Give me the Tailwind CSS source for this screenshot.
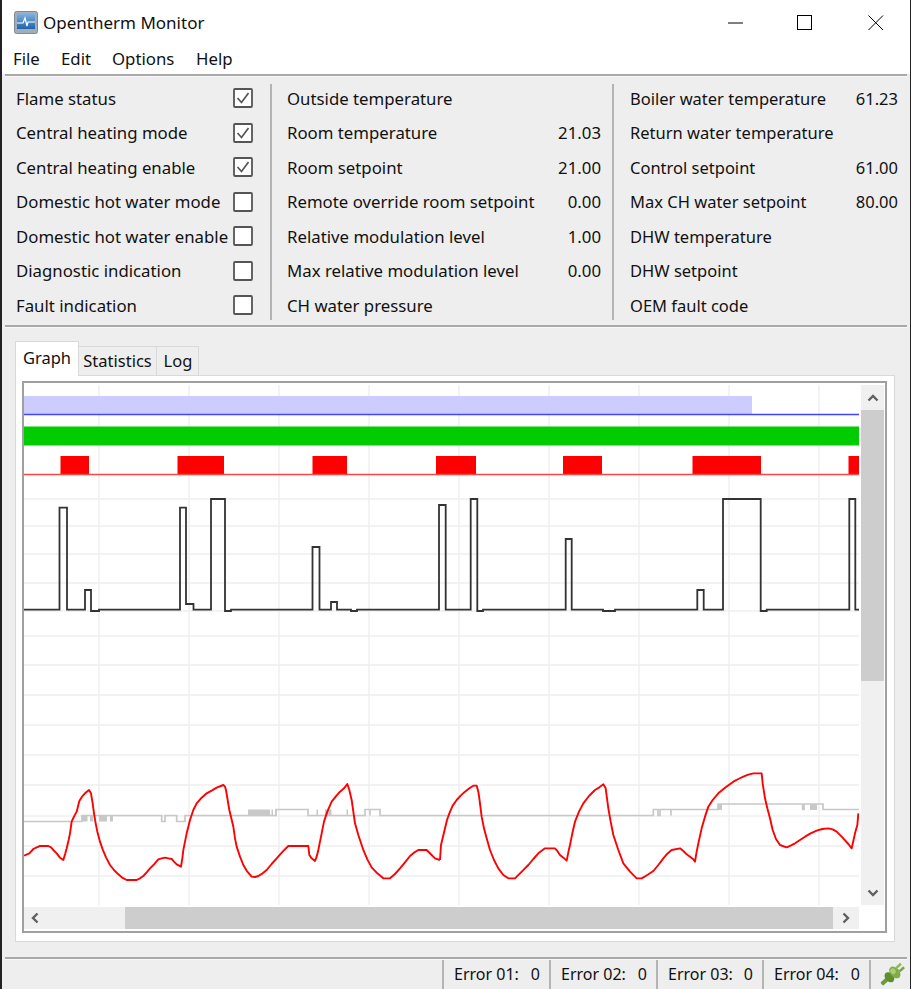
<!DOCTYPE html>
<html lang="en">
<head>
<meta charset="UTF-8">
<title>Opentherm Monitor</title>
<script src="https://cdn.jsdelivr.net/npm/@tailwindcss/browser@4"></script>
</head>
<body class="bg-[#eeeeee] overflow-hidden">
<div class="w-[911px] h-[989px] flex flex-col bg-[#eeeeee] text-[#111] text-[16.8px] font-['Noto_Sans',sans-serif] border-l-2 border-r border-[#222]">

  <!-- title bar -->
  <header class="h-[45px] bg-white flex items-center shrink-0">
    <svg class="ml-[12px] w-[24px] h-[24px]" viewBox="0 0 24 24">
      <defs><linearGradient id="scr" x1="0" y1="0" x2="0" y2="1"><stop offset="0" stop-color="#7fb0de"/><stop offset="1" stop-color="#1d63ad"/></linearGradient></defs>
      <rect x="0.5" y="0.5" width="23" height="22" rx="2" fill="#a3adb7" stroke="#7f8a95"/>
      <rect x="3" y="3" width="18" height="15" fill="url(#scr)"/>
      <polyline points="3,12 9,12 11,7 13,15 14,11 21,11" fill="none" stroke="#fff" stroke-width="1.2"/>
    </svg>
    <span class="ml-[5px] text-[17px]">Opentherm Monitor</span>
    <div class="ml-auto flex items-center">
      <svg class="w-[16px] h-[16px] mr-[53px]" viewBox="0 0 16 16"><path d="M0 8H15" stroke="#000" stroke-width="1"/></svg>
      <svg class="w-[16px] h-[16px] mr-[55px]" viewBox="0 0 16 16"><rect x="0.5" y="0.5" width="14" height="14" fill="none" stroke="#000"/></svg>
      <svg class="w-[16px] h-[16px] mr-[26px]" viewBox="0 0 16 16"><path d="M0.5 0.5L15 15M15 0.5L0.5 15" stroke="#000" stroke-width="1"/></svg>
    </div>
  </header>

  <!-- menu -->
  <nav class="h-[29px] bg-white flex items-center shrink-0 pl-[11px] pb-[1px]">
    <a class="w-[48px]">File</a>
    <a class="w-[51px]">Edit</a>
    <a class="w-[84px]">Options</a>
    <a>Help</a>
  </nav>
  <div class="h-[3px] ml-[3px] mr-[3px] bg-[#f8f8f8] border-t-2 border-[#a9a9a9] shrink-0"></div>

  <!-- status fields -->
  <section class="h-[248px] flex pt-[4px] shrink-0">
    <div class="w-[268px] pl-[14px] pr-[17px] h-[241px] shrink-0">
      <div class="h-[34.5px] flex items-center justify-between">Flame status
        <svg class="w-[20px] h-[20px]" viewBox="0 0 20 20"><rect x="1" y="1" width="18" height="18" rx="1" fill="#fff" stroke="#555" stroke-width="1.8"/><path d="M4.5 10L8.5 14.5L15.5 5" fill="none" stroke="#555" stroke-width="1.7"/></svg></div>
      <div class="h-[34.5px] flex items-center justify-between">Central heating mode
        <svg class="w-[20px] h-[20px]" viewBox="0 0 20 20"><rect x="1" y="1" width="18" height="18" rx="1" fill="#fff" stroke="#555" stroke-width="1.8"/><path d="M4.5 10L8.5 14.5L15.5 5" fill="none" stroke="#555" stroke-width="1.7"/></svg></div>
      <div class="h-[34.5px] flex items-center justify-between">Central heating enable
        <svg class="w-[20px] h-[20px]" viewBox="0 0 20 20"><rect x="1" y="1" width="18" height="18" rx="1" fill="#fff" stroke="#555" stroke-width="1.8"/><path d="M4.5 10L8.5 14.5L15.5 5" fill="none" stroke="#555" stroke-width="1.7"/></svg></div>
      <div class="h-[34.5px] flex items-center justify-between">Domestic hot water mode
        <svg class="w-[20px] h-[20px]" viewBox="0 0 20 20"><rect x="1" y="1" width="18" height="18" rx="1" fill="#fff" stroke="#555" stroke-width="1.8"/></svg></div>
      <div class="h-[34.5px] flex items-center justify-between">Domestic hot water enable
        <svg class="w-[20px] h-[20px]" viewBox="0 0 20 20"><rect x="1" y="1" width="18" height="18" rx="1" fill="#fff" stroke="#555" stroke-width="1.8"/></svg></div>
      <div class="h-[34.5px] flex items-center justify-between">Diagnostic indication
        <svg class="w-[20px] h-[20px]" viewBox="0 0 20 20"><rect x="1" y="1" width="18" height="18" rx="1" fill="#fff" stroke="#555" stroke-width="1.8"/></svg></div>
      <div class="h-[34.5px] flex items-center justify-between">Fault indication
        <svg class="w-[20px] h-[20px]" viewBox="0 0 20 20"><rect x="1" y="1" width="18" height="18" rx="1" fill="#fff" stroke="#555" stroke-width="1.8"/></svg></div>
    </div>
    <div class="w-[344px] h-[236px] mt-[3px] border-l-2 border-r-2 border-[#b4b4b4] pl-[15px] pr-[11px] shrink-0">
      <div class="-mt-[3px]">
      <div class="h-[34.5px] flex items-center justify-between"><span>Outside temperature</span></div>
      <div class="h-[34.5px] flex items-center justify-between"><span>Room temperature</span><span>21.03</span></div>
      <div class="h-[34.5px] flex items-center justify-between"><span>Room setpoint</span><span>21.00</span></div>
      <div class="h-[34.5px] flex items-center justify-between"><span>Remote override room setpoint</span><span>0.00</span></div>
      <div class="h-[34.5px] flex items-center justify-between"><span>Relative modulation level</span><span>1.00</span></div>
      <div class="h-[34.5px] flex items-center justify-between"><span>Max relative modulation level</span><span>0.00</span></div>
      <div class="h-[34.5px] flex items-center justify-between"><span>CH water pressure</span></div>
      </div>
    </div>
    <div class="w-[294px] pt-[1px] pl-[16px] pr-[10px] shrink-0 text-[16.5px]">
      <div class="h-[34.5px] flex items-center justify-between"><span>Boiler water temperature</span><span>61.23</span></div>
      <div class="h-[34.5px] flex items-center justify-between"><span>Return water temperature</span></div>
      <div class="h-[34.5px] flex items-center justify-between"><span>Control setpoint</span><span>61.00</span></div>
      <div class="h-[34.5px] flex items-center justify-between"><span>Max CH water setpoint</span><span>80.00</span></div>
      <div class="h-[34.5px] flex items-center justify-between"><span>DHW temperature</span></div>
      <div class="h-[34.5px] flex items-center justify-between"><span>DHW setpoint</span></div>
      <div class="h-[34.5px] flex items-center justify-between"><span>OEM fault code</span></div>
    </div>
  </section>
  <div class="h-[3px] ml-[3px] mr-[3px] bg-[#f8f8f8] border-t-2 border-[#a9a9a9] shrink-0"></div>

  <!-- tabs -->
  <div class="h-[13px] shrink-0"></div>
  <div class="h-[35px] flex items-end pl-[13px] shrink-0 relative z-10 text-[16.5px]">
    <div class="w-[64px] h-[35px] bg-white border border-b-0 border-[#d9d9d9] flex items-center justify-center pb-[2px]">Graph</div>
    <div class="w-[78px] h-[30px] border border-b-0 border-l-0 border-[#d9d9d9] flex items-center justify-center">Statistics</div>
    <div class="w-[42px] h-[30px] border border-b-0 border-l-0 border-[#d9d9d9] flex items-center justify-center pl-[1px]">Log</div>
  </div>
  <main class="ml-[13px] w-[880px] h-[567px] bg-white border border-[#d9d9d9] pt-[5px] pl-[6px] -mt-px shrink-0">
    <div class="w-[865px] h-[552px] border-2 border-[#a0a0a0] grid grid-cols-[835px_2px_23px] grid-rows-[2px_520px_2px_22px]">
      <div class="col-span-3"></div>
      <!-- chart -->
      <svg class="w-[835px] h-[520px]" viewBox="24 385 835 520" fill="none">
        <g stroke="#f0f0f0" stroke-width="1.5">
          <path d="M99 385V905M189 385V905M279 385V905M369 385V905M459 385V905M549 385V905M639 385V905M729 385V905M819 385V905"/>
          <path d="M24 499H859M24 526H859M24 554H859M24 583H859M24 611H859M24 636H859M24 665H859M24 695H859M24 725H859M24 755H859M24 785H859M24 816H859M24 846H859M24 876H859"/>
        </g>
        <rect x="24" y="396" width="728" height="18" fill="#ccccff"/>
        <path d="M24 414.5H859" stroke="#4444ff" stroke-width="1.5"/>
        <rect x="24" y="426.5" width="835" height="19" fill="#00cc00"/>
        <g fill="#ff0000">
          <rect x="60.5" y="456" width="28.5" height="18"/>
          <rect x="177.5" y="456" width="46.5" height="18"/>
          <rect x="312.5" y="456" width="34.5" height="18"/>
          <rect x="436" y="456" width="40" height="18"/>
          <rect x="563" y="456" width="39" height="18"/>
          <rect x="692.5" y="456" width="68.5" height="18"/>
          <rect x="848.5" y="456" width="10.5" height="18"/>
        </g>
        <path d="M24 474.5H859" stroke="#ff4444" stroke-width="1.5"/>
        <!-- modulation trace -->
        <polyline stroke="#333" stroke-width="1.8" points="24,609.7 59.5,609.7 59.5,507.7 67,507.7 67,609.7 85,609.7 85,590 91,590 91,611 99,611 99,609.7 180,609.7 180,507.7 186,507.7 186,604 193.5,604 193.5,609.7 211,609.7 211,499 225,499 225,611 231,611 231,609.7 312.5,609.7 312.5,547 319.5,547 319.5,609.7 331,609.7 331,602 337,602 337,609.7 351,609.7 351,611 357,611 357,609.7 439,609.7 439,505 445.7,505 445.7,609.7 470.7,609.7 470.7,499 477.3,499 477.3,611 483,611 483,609.7 565.7,609.7 565.7,539 571.7,539 571.7,609.7 603,609.7 603,611 615,611 615,609.7 697.3,609.7 697.3,590 703.7,590 703.7,609.7 723,609.7 723,499 760.7,499 760.7,611 766.7,611 766.7,609.7 849.3,609.7 849.3,499 855.3,499 855.3,609.7 859,609.7"/>
        <!-- setpoint trace -->
        <g fill="#c8c8c8">
          <rect x="82" y="815.5" width="5.5" height="6"/>
          <rect x="90" y="815.5" width="3" height="6"/>
          <rect x="99" y="815.5" width="8" height="6"/>
          <rect x="110" y="815.5" width="3" height="6"/>
          <rect x="248" y="809.5" width="22" height="6"/>
          <rect x="271.5" y="809.5" width="1.5" height="6"/>
          <rect x="275" y="809.5" width="1.5" height="6"/>
          <rect x="316.5" y="809.5" width="1.5" height="6"/>
          <rect x="325" y="809.5" width="6.5" height="6"/>
          <rect x="346.5" y="809.5" width="1.5" height="6"/>
          <rect x="718" y="804" width="4" height="6"/>
          <rect x="810" y="804" width="7" height="6"/>
        </g>
        <polyline stroke="#c8c8c8" stroke-width="1.7" points="24,821.5 82,821.5 82,815.5 161.7,815.5 161.7,821.5 165,821.5 165,815.5 176.7,815.5 176.7,821.5 185,821.5 185,815.5 248,815.5 276,815.5 276,809.5 308,809.5 308,815.5 365,815.5 365,809.5 370,809.5 370,815.5 370,809.5 380,809.5 380,815.5 653.3,815.5 653.3,809.5 658,809.5 658,815.5 660,815.5 660,809.5 671,809.5 671,815.5 671,809.5 718,809.5 718,804 802.7,804 802.7,809.5 804,809.5 804,804 823,804 823,809.5 859,809.5"/>
        <!-- room temperature, traced from the left half then the right half -->
        <g transform="translate(20 770) scale(0.33333)">
          <polyline vector-effect="non-scaling-stroke" stroke="#ff0000" stroke-width="1.9" stroke-linejoin="round" points="12,257 28,250 40,237 50,232 60,228 85,228 93,232 100,240 110,250 120,263 130,270 136,250 140,235 146,210 150,190 155,155 162,140 170,125 178,93 186,80 195,70 207,60 213,70 218,100 222,130 227,160 232,185 240,215 248,238 258,262 270,285 282,300 295,313 307,323 320,330 350,330 360,325 370,318 380,307 390,295 402,283 415,268 425,265 435,263 445,265 455,267 462,275 470,283 483,290 487,265 490,240 495,215 500,190 505,170 510,150 520,120 530,100 545,83 560,70 575,62 590,53 610,45 615,50 618,60 623,90 628,120 634,145 640,170 645,205 650,230 660,260 670,285 682,305 695,320 705,321 715,318 728,310 740,300 755,282 770,265 788,245 805,228 865,228 868,255 875,265 885,273 890,260 895,240 900,215 905,190 912,155 922,125 935,95 947,80 960,65 972,55 982,42 988,60 995,90 1000,125 1005,160 1015,195 1030,240 1042,268 1055,292 1072,310 1090,325 1110,325 1125,312 1140,295 1155,277 1170,258 1182,248 1195,240 1220,240 1232,252 1245,265 1260,270"/>
        </g>
        <g transform="translate(440 765) scale(0.33333)">
          <polyline vector-effect="non-scaling-stroke" stroke="#ff0000" stroke-width="1.9" stroke-linejoin="round" points="0,285 3,240 15,190 21,165 28,145 38,122 50,105 62,92 75,80 88,70 100,62 110,62 115,80 118,100 125,155 132,190 140,220 150,255 162,285 175,310 190,330 205,340 225,340 240,325 252,313 265,300 280,282 295,265 315,250 345,250 352,258 360,270 370,278 380,287 385,262 390,240 397,205 405,170 417,140 430,115 447,93 465,75 478,67 490,58 497,70 501,100 505,130 512,170 520,210 535,255 550,295 570,320 590,340 605,340 622,330 640,318 655,300 670,280 682,266 695,255 720,250 730,258 740,268 750,275 760,283 765,290 770,260 775,235 785,190 795,155 805,125 818,105 835,85 857,67 880,50 895,42 910,35 925,29 940,25 965,25 968,55 975,100 982,130 990,160 998,195 1008,222 1020,240 1040,247 1052,242 1065,235 1080,225 1095,215 1112,205 1130,197 1147,192 1165,190 1178,193 1190,200 1208,218 1225,237 1235,250 1240,228 1245,205 1252,180 1255,145"/>
        </g>
      </svg>
      <div></div>
      <!-- vertical scrollbar -->
      <div class="bg-[#f0f0f0] flex flex-col items-center">
        <div class="h-[25px] flex items-center justify-center shrink-0">
          <svg class="w-[12px] h-[8px]" viewBox="0 0 12 8"><path d="M1.5 6.5L6 2L10.5 6.5" fill="none" stroke="#606060" stroke-width="2.4"/></svg>
        </div>
        <div class="w-full h-[271px] bg-[#cdcdcd] shrink-0"></div>
        <div class="flex-1"></div>
        <div class="h-[25px] flex items-center justify-center shrink-0">
          <svg class="w-[12px] h-[8px]" viewBox="0 0 12 8"><path d="M1.5 1.5L6 6L10.5 1.5" fill="none" stroke="#606060" stroke-width="2.4"/></svg>
        </div>
      </div>
      <div class="col-span-3"></div>
      <!-- horizontal scrollbar -->
      <div class="bg-[#f0f0f0] flex items-center">
        <div class="w-[101px] pl-[7px] shrink-0">
          <svg class="w-[8px] h-[12px]" viewBox="0 0 8 12"><path d="M6.5 1.5L2 6L6.5 10.5" fill="none" stroke="#606060" stroke-width="2.4"/></svg>
        </div>
        <div class="w-[708px] h-full bg-[#cdcdcd] shrink-0"></div>
        <div class="flex-1 flex justify-center">
          <svg class="w-[8px] h-[12px]" viewBox="0 0 8 12"><path d="M1.5 1.5L6 6L1.5 10.5" fill="none" stroke="#606060" stroke-width="2.4"/></svg>
        </div>
      </div>
    </div>
  </main>

  <!-- status bar -->
  <div class="h-[15px] shrink-0"></div>
  <div class="h-[3px] ml-[3px] mr-[3px] bg-[#f8f8f8] border-t-2 border-[#a9a9a9] shrink-0"></div>
  <footer class="flex-1 flex justify-end items-stretch text-[16px]">
    <div class="w-[107px] border-l-2 border-[#b4b4b4] flex items-center justify-between pl-[10px] pr-[9px] pb-[2px]"><span>Error 01:</span><span>0</span></div>
    <div class="w-[107px] border-l-2 border-[#b4b4b4] flex items-center justify-between pl-[10px] pr-[9px] pb-[2px]"><span>Error 02:</span><span>0</span></div>
    <div class="w-[106px] border-l-2 border-[#b4b4b4] flex items-center justify-between pl-[10px] pr-[9px] pb-[2px]"><span>Error 03:</span><span>0</span></div>
    <div class="w-[107px] border-l-2 border-[#b4b4b4] flex items-center justify-between pl-[10px] pr-[9px] pb-[2px]"><span>Error 04:</span><span>0</span></div>
    <div class="w-[41px] border-l-2 border-[#b4b4b4] flex items-center pl-[8px]">
      <svg class="w-[27px] h-[27px]" viewBox="0 0 26 26"><g transform="rotate(-42 13 13)"><rect x="-1" y="11" width="7" height="4" rx="1" fill="#6c9a38"/><ellipse cx="9" cy="13" rx="4" ry="5.5" fill="#5f8e2e"/><rect x="11" y="10.5" width="4" height="5" fill="#5a8a2c"/><ellipse cx="16" cy="13" rx="4.5" ry="6.5" fill="#7fae48"/><ellipse cx="15.5" cy="11" rx="2.5" ry="2.8" fill="#a9cd7a"/><rect x="20" y="9.5" width="6" height="2.5" fill="#8dba57"/><rect x="20" y="14" width="6" height="2.5" fill="#7aa845"/></g></svg>
    </div>
  </footer>
</div>
</body>
</html>
